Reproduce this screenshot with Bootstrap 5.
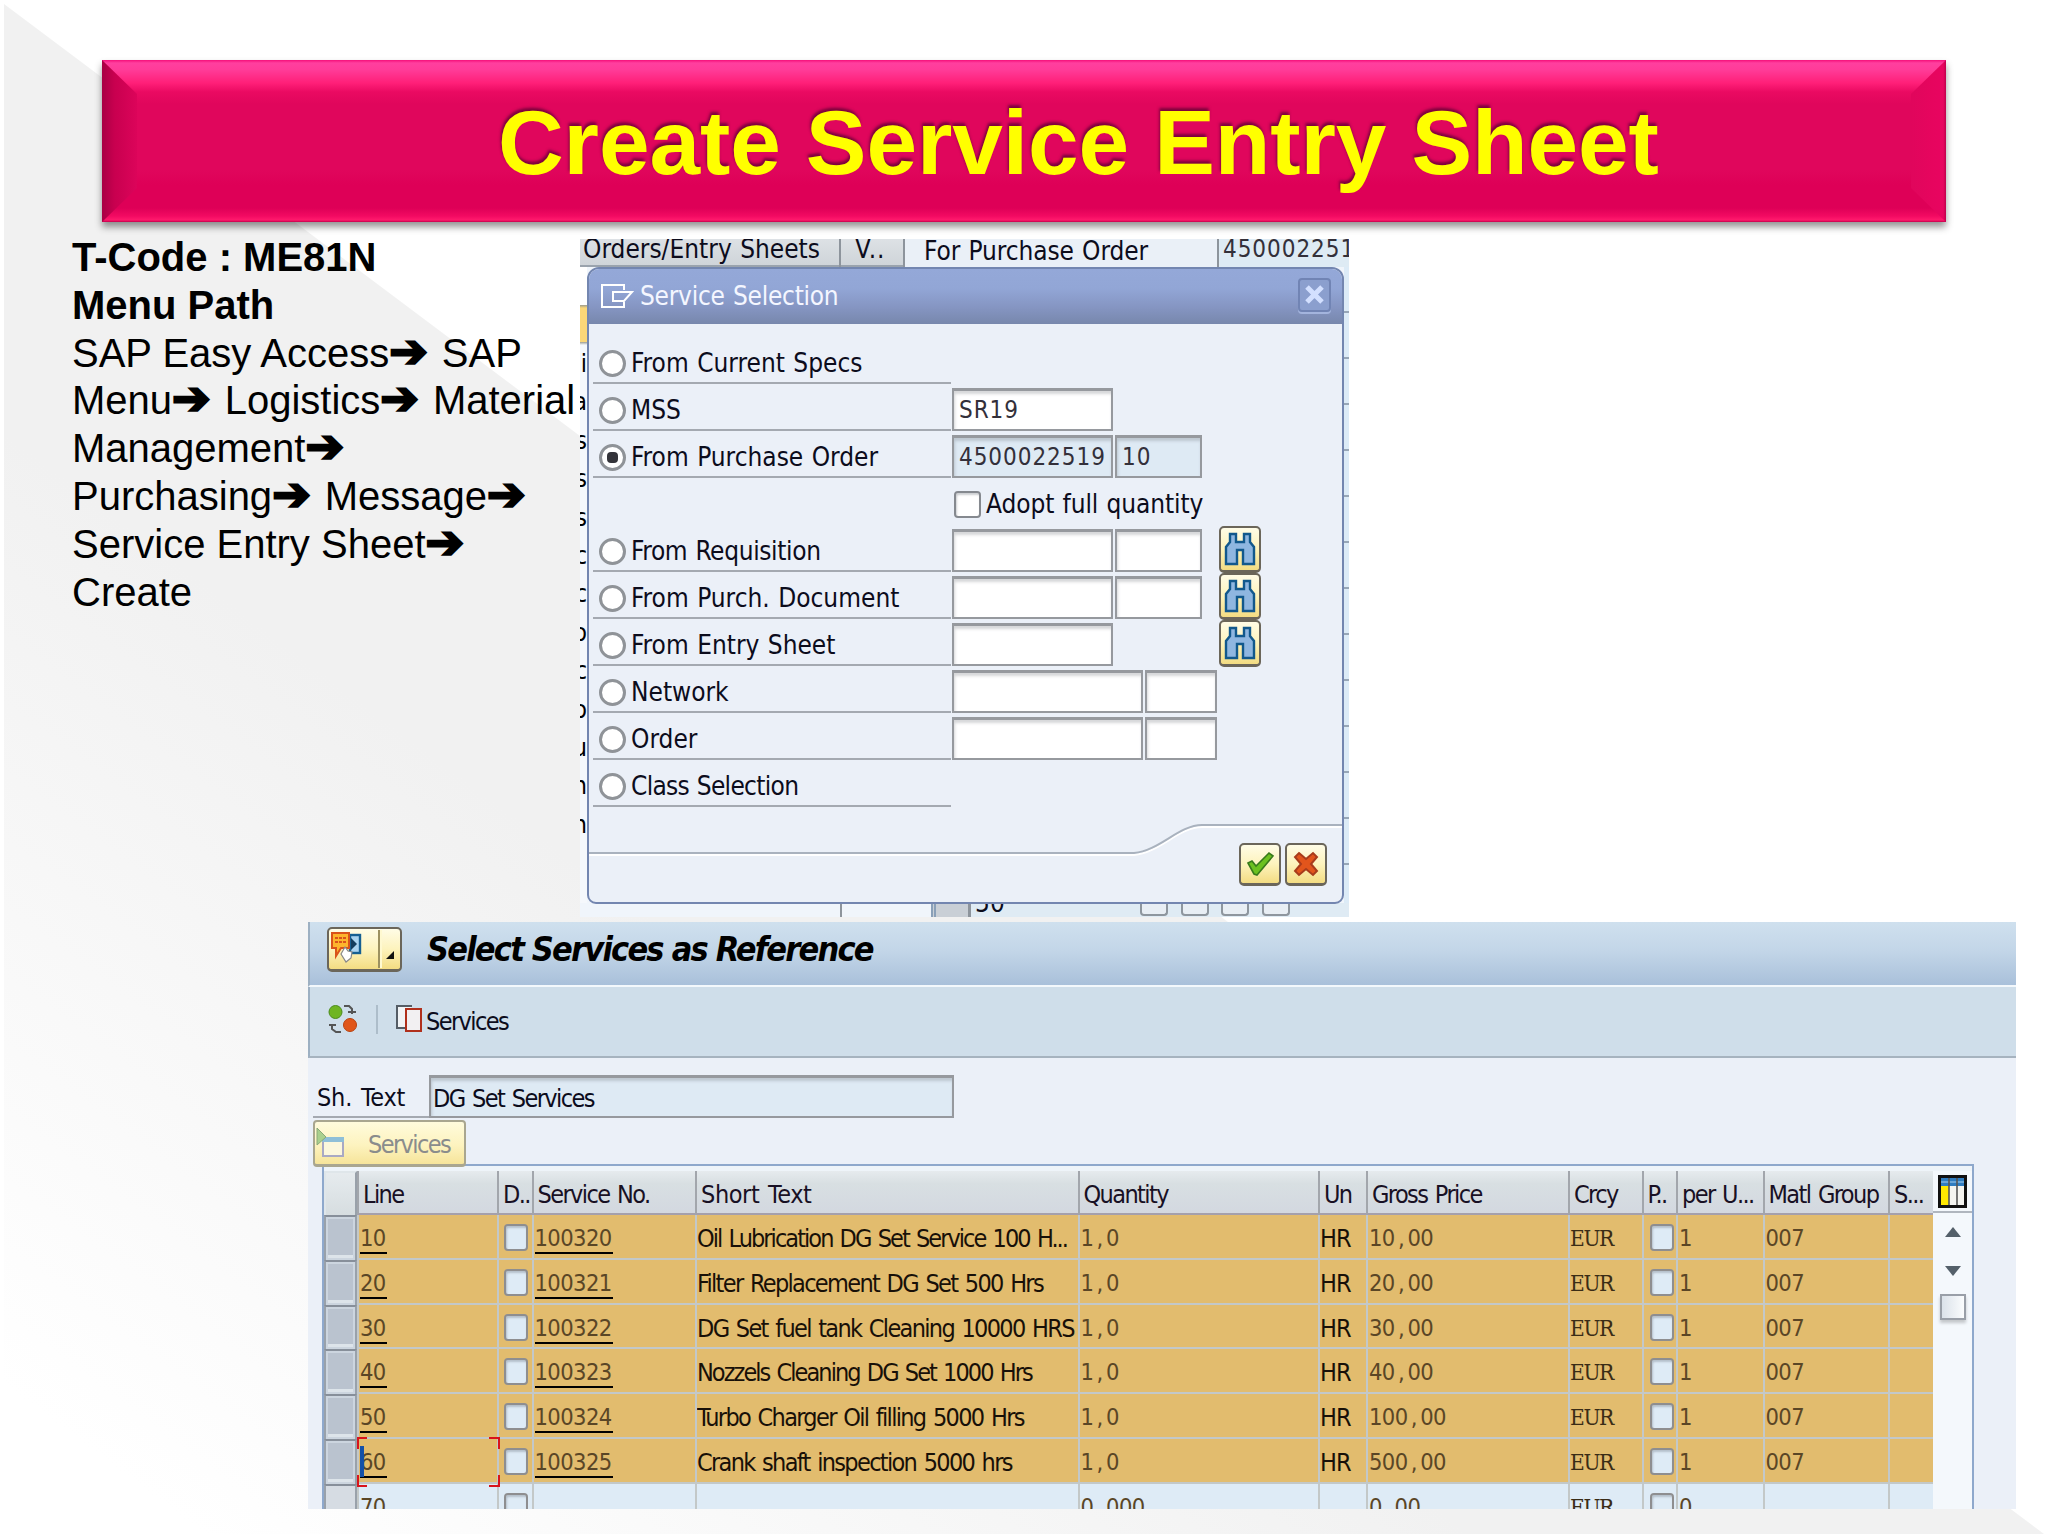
<!DOCTYPE html>
<html lang="en">
<head>
<meta charset="utf-8">
<meta name="viewport" content="width=device-width, initial-scale=1">
<title>Create Service Entry Sheet</title>
<link href="https://cdn.jsdelivr.net/npm/bootstrap@5.3.0/dist/css/bootstrap.min.css" rel="stylesheet">
<style>
  body { background:#fff; color:#000; font-family:"Liberation Sans",sans-serif; }
  svg { display:block; flex:none; }
  .slide { width:2048px; height:1536px; position:relative; overflow:hidden; isolation:isolate; }
  .slide::before { content:""; position:absolute; z-index:-1; inset:0;
    clip-path:polygon(4px 4px,2044px 1534px,4px 1534px);
    background:linear-gradient(to top right,#fff 5%,#f1f1f1 36%); }

  /* title banner */
  .banner { width:1844px; height:162px; margin:60px 0 0 102px; padding-left:396px; position:relative;
    background:linear-gradient(#f5107a 0,#ff3f9f 3px,#ff3b98 10px,#ff1f78 23px,#ea0a62 32px,#e0065c 44px,#e0065c 110px,#de0057 125px,#de0057 148px,#f20a62 156px,#ff1a6c 160px,#c4004c 162px);
    box-shadow:0 5px 7px rgba(0,0,0,.42); }
  .banner::before, .banner::after { content:""; position:absolute; top:0; bottom:0; width:35px; }
  .banner::before { left:0; clip-path:polygon(0 0,100% 34px,100% 128px,0 100%); background:linear-gradient(90deg,#a80044,#c8004f 35%,#dc045a); }
  .banner::after { right:0; clip-path:polygon(100% 0,0 34px,0 128px,100% 100%); background:linear-gradient(90deg,#e0065c,#e6055e 60%,#e80560 92%,#c0004c); }
  .banner h1 { font-size:91px; line-height:166px; letter-spacing:-.1px; font-weight:700; color:#ff0; white-space:nowrap;
    text-shadow:-1px -3px 3px rgba(90,0,50,.75); }

  .path-text { width:580px; padding:12px 0 0 72px; font-size:40px; line-height:47.8px; white-space:nowrap; }
  .arr { font-family:"DejaVu Sans",sans-serif; font-size:46px; display:inline-block; width:41.5px; line-height:40px; -webkit-text-stroke:2.5px #000; }

  /* SAP screens */
  .sap { font-family:"DejaVu Sans Condensed","DejaVu Sans",sans-serif; font-stretch:condensed; font-size:26px; white-space:nowrap; overflow:hidden; color:#0c0c1c; }
  .num { font-size:24px; letter-spacing:.95px; word-spacing:0; color:#33303a; }
  .shot1 { width:769px; height:678px; margin-top:17px; position:relative; background:#f0f5fb; letter-spacing:0; word-spacing:1px; }
  .tabs { height:28px; line-height:20px; background:linear-gradient(#dde1e5,#cfd4d9); border-bottom:2px solid #9aa3ad; }
  .tabs > div { height:28px; }
  .t1 { width:261px; padding-left:3px; border-right:2px solid #8d949c; line-height:20px; }
  .t2 { width:64px; padding-left:14px; border-right:2px solid #8d949c; line-height:20px; letter-spacing:1px; }
  .t3 { width:312px; padding-left:19px; line-height:24px; background:#eaf0f7; letter-spacing:-.1px; }
  .t4 { width:132px; padding-left:4px; border-left:2px solid #8d949c; background:#deebf4; line-height:21px; overflow:hidden; }
  .edge { height:636px; width:7px; overflow:hidden; }
  .edge span { display:block; direction:rtl; width:7px; height:38.4px; line-height:38px; color:#000; font-size:25px; }
  .edge-l { background:linear-gradient(#fff 0,#fff 38px,#9c9c90 38px,#fbd778 41px,#fbd778 75px,#9c9c90 75px,#f5f8fc 78px); padding-top:78px; }
  .edge-r { width:5px; background:repeating-linear-gradient(#dcebf7 0,#dcebf7 44px,#97a6b7 44px,#97a6b7 46px); }
  .under { height:14px; }
  .under .grayblk { width:40px; margin-left:-4px; background:#c9cfd6; border-left:5px double #8aa0b8; border-right:3px solid #8d949c; }
  .under .boxy { width:28px; height:13px; border:2px solid #8e969e; border-top:0; border-radius:0 0 4px 4px; margin-right:12.5px; background:#e8eef4; }

  .dlg { position:absolute; left:7px; top:28px; width:757px; height:637px; border:2px solid #7386b0; border-radius:12px 12px 9px 9px; background:#ebf0f8; overflow:hidden; }
  .dlg-title { height:55px; padding:0 11px 0 12px; background:linear-gradient(#94a8d8,#92a6d6 35%,#8595c2 70%,#7787ac); color:#f4f6ff; letter-spacing:-.25px; }
  .closer { width:33px; height:34px; border:2px solid #7184b4; border-radius:4px; background:#8b9fce; box-shadow:0 2px 0 #a3b4dd; margin-top:-4px; }
  .opts { padding:13px 0 0 4px; }
  .opt { height:47px; }
  .opt-l { width:358px; height:47px; border-bottom:2px solid #a4a9b1; padding:8px 0 0 6px; }
  .opt-l.bare { border-color:transparent; }
  .tight { letter-spacing:-.7px; }
  .half { letter-spacing:-.35px; }
  .rad { width:27px; height:27px; border:3px solid #8f9398; border-radius:50%; background:#fff; margin-right:5px; display:flex; align-items:center; justify-content:center; flex:none; }
  .rad.on::after { content:""; width:11px; height:11px; border-radius:4px; background:#34343a; }
  .fld { height:43px; border:2px solid #96999e; border-top-width:3px; background:#fff; box-shadow:inset 1px 3px 3px rgba(90,95,105,.25); padding-left:5px; line-height:38px; margin-left:1px; }
  .fld + .fld { margin-left:2px; }
  .fld.ro { background:#deeaf4; }
  .w-a { width:161px; } .w-b { width:87px; } .w-c { width:191px; } .w-d { width:72px; }
  .chk { width:27px; height:27px; border:2px solid #85898f; border-radius:4px; background:#fff; box-shadow:inset 1px 2px 2px rgba(90,95,105,.3); flex:none; }
  .ybtn { border:2px solid #6b665a; border-bottom-width:3px; border-radius:5px; background:linear-gradient(#fffce6,#fdf3bd 50%,#f3dc82); display:flex; align-items:center; justify-content:center; }
  .bino { width:42px; height:47px; position:relative; top:1px; }
  .gap-18 { margin-left:17px; }

  .shot2 { width:1708px; height:587px; margin:5px 0 0 308px; background:#ebf0f8; font-size:25px; letter-spacing:-1.6px; word-spacing:2px; }
  .loose { letter-spacing:-.4px; }
  .bar1 { height:65px; padding:5px 0 0 17px; border-left:2px solid #9db0c2; background:linear-gradient(#cfe0ee,#c3d6e8 45%,#a9c0da); border-bottom:2px solid #f3f8fc; }
  .bar1 h2 { font-size:34px; font-weight:700; font-style:italic; letter-spacing:-1.8px; word-spacing:0; line-height:45px; color:#000; margin:0 0 0 25px; }
  .menubtn { width:75px; height:45px; justify-content:flex-start; }
  .bar2 { height:71px; padding:0 0 0 18px; border-left:2px solid #9db0c2; border-bottom:2px solid #a6b3bf; background:#cfdeea; }
  .sep { width:2px; height:29px; background:#adbdca; margin:0 18px; }
  .shtext { height:60px; padding:17px 0 0 5px; }
  .shlab { width:116px; height:43px; border-bottom:2px solid #a4a9b1; padding-left:4px; line-height:46px; letter-spacing:-.2px; }
  .shfld { width:525px; margin:0; line-height:41px; padding-left:2px; }
  .svc { width:153px; height:47px; margin:2px 0 0 5px; padding-left:1px; border:2px solid #a9a68f; border-bottom-width:3px; border-radius:4px; background:linear-gradient(#fffbdc,#fdf3bf 55%,#f6e49a); color:#8a8c8c; justify-content:flex-start; position:relative; z-index:1; }

  .grid-wrap { width:1652px; height:346px; margin:-3px 0 0 14px; border:2px solid #8ea8cc; border-bottom:0; background:#eef4f9; padding-top:5px; }
  .gr { display:grid; grid-template-columns:33px 140px 34.5px 163.5px 382.5px 240.5px 48px 202px 73.5px 34.5px 86.5px 125.5px 45px; width:1609px; height:44.8px; }
  .gr > div { border-left:2px solid #c3c8c8; border-bottom:2px solid #c3c8c8; padding-left:0; line-height:48px; overflow:hidden; background:#e2bc6e; height:44.8px; color:#181008; }
  .gr .num { font-size:23.5px; letter-spacing:-.6px; line-height:46px; color:#5a4626; padding-left:1px; }
  .gr .eur { font-family:"DejaVu Serif Condensed","DejaVu Serif",serif; font-size:22.5px; letter-spacing:-1.4px; line-height:46px; color:#3a2c16; }
  .gr .unit { letter-spacing:-.8px; }
  .gr .item { letter-spacing:-1.68px; }
  .gr .item.narrow { letter-spacing:-1.95px; }
  .gr.head { height:44px; }
  .gr.head > div { height:44px; background:linear-gradient(#e6ebee,#d8dfe2 30%,#d3d8e0); border-left-color:#a2a6ac; border-bottom-color:#a5a0ac; padding-left:4px; line-height:48px; color:#181024; }
  .gr > div.sel { border:2px solid #99a1aa; border-top-color:#878f9a; border-bottom:0; background:#bac3cf; box-shadow:inset 0 0 0 2px #ccd5df, inset 0 -5px 0 #dde4ea; padding:0; }
  .gr.head > div.sel { box-shadow:none; background:linear-gradient(#e6ebee,#d6dde0); border-color:#dfe6ea #99a1aa #99a1aa #dfe6ea; }
  .gr.last > div { background:#deebf6; }
  .gr.last > div.sel { background:#d6dce3; box-shadow:none; }
  .gr u { text-decoration:none; display:inline-block; height:39px; border-bottom:2px solid #000; padding-right:1px; }
  .gr .chk { width:24px; height:27px; margin:9px 0 0 5px; border-color:#8e8e90; background:#deebf6; }
  .gr .chk.p { margin-left:6px; }
  .cm { margin:0 3.4px 0 3.2px; }
  .focus-cell { position:relative; }
  .focus-cell svg { position:absolute; left:-2px; top:-2px; }
  .vbar { width:39px; background:#f4f8fc; }
  .tri { width:0; height:0; border:8px solid transparent; }
  .thumb { width:26px; height:26px; border:2px solid #999fa8; background:linear-gradient(90deg,#dbe2ea,#fafcfd); box-shadow:0 3px 3px rgba(0,0,0,.2); }
</style>
</head>
<body>
<main class="slide">
  <header class="banner"><h1 class="m-0">Create Service Entry Sheet</h1></header>

  <div class="d-flex">
    <section class="path-text">
      <b>T-Code : ME81N</b><br><b>Menu Path</b><br>
      SAP Easy Access<span class="arr">➔</span> SAP<br>
      Menu<span class="arr">➔</span> Logistics<span class="arr">➔</span> Material<br>
      Management<span class="arr">➔</span><br>
      Purchasing<span class="arr">➔</span> Message<span class="arr">➔</span><br>
      Service Entry Sheet<span class="arr">➔</span><br>
      Create
    </section>

    <section class="sap shot1">
      <div class="tabs d-flex">
        <div class="t1">Orders/Entry Sheets</div><div class="t2">V..</div>
        <div class="t3">For Purchase Order</div><div class="t4 num">4500022513</div>
      </div>
      <div class="d-flex justify-content-between">
        <div class="edge edge-l"><span>i</span><span>a</span><span>s</span><span>s</span><span>s</span><span>c</span><span>c</span><span>o</span><span>c</span><span>o</span><span>u</span><span>n</span><span>n</span></div>
        <div class="edge edge-r"></div>
      </div>
      <div class="under d-flex">
        <div style="width:260px"></div><div style="width:95px;border-left:2px solid #8d949c"></div>
        <div class="grayblk"></div>
        <div class="d-flex flex-fill" style="background:#dfebf4"><div style="width:169px;padding-left:4px;line-height:0">50</div><div class="boxy"></div><div class="boxy"></div><div class="boxy"></div><div class="boxy"></div></div>
      </div>

      <div class="dlg d-flex flex-column">
        <div class="dlg-title d-flex align-items-center">
          <svg width="33" height="25" viewBox="0 0 33 25" fill="none" stroke="#fff" stroke-width="2"><path d="M23 6V1H1v22h22v-5M12 8h19l-8 9H12z"/></svg>
          <span style="margin-left:6px">Service Selection</span>
          <span class="closer ms-auto d-flex align-items-center justify-content-center"><svg width="19" height="19" viewBox="0 0 19 19" stroke="#d3e0ff" stroke-width="5"><path d="M2 2l15 15M17 2L2 17"/></svg></span>
        </div>
        <div class="opts">
          <div class="opt d-flex"><div class="opt-l d-flex align-items-center"><i class="rad"></i>From Current Specs</div></div>
          <div class="opt d-flex align-items-end"><div class="opt-l d-flex align-items-center"><i class="rad"></i>MSS</div><div class="fld w-a num">SR19</div></div>
          <div class="opt d-flex align-items-end"><div class="opt-l d-flex align-items-center"><i class="rad on"></i>From Purchase Order</div><div class="fld ro w-a num">4500022519</div><div class="fld ro w-b num">10</div></div>
          <div class="opt d-flex"><div class="opt-l bare"></div><div class="d-flex align-items-center" style="padding-top:6px;letter-spacing:-.1px"><i class="chk" style="margin:0 5px 0 3px"></i>Adopt full quantity</div></div>
          <div class="opt d-flex align-items-end"><div class="opt-l d-flex align-items-center half"><i class="rad"></i>From Requisition</div><div class="fld w-a"></div><div class="fld w-b"></div><span class="ybtn bino gap-18"><svg width="32" height="34" viewBox="0 0 32 34"><path d="M6 2h6v8h8V2h6v8l4 5v17H19V18h-6v14H2V15l4-5z" fill="#8fb6e0" stroke="#12588c" stroke-width="2.4"/></svg></span></div>
          <div class="opt d-flex align-items-end"><div class="opt-l d-flex align-items-center"><i class="rad"></i>From Purch. Document</div><div class="fld w-a"></div><div class="fld w-b"></div><span class="ybtn bino gap-18"><svg width="32" height="34" viewBox="0 0 32 34"><path d="M6 2h6v8h8V2h6v8l4 5v17H19V18h-6v14H2V15l4-5z" fill="#8fb6e0" stroke="#12588c" stroke-width="2.4"/></svg></span></div>
          <div class="opt d-flex align-items-end"><div class="opt-l d-flex align-items-center"><i class="rad"></i>From Entry Sheet</div><div class="fld w-a"></div><span class="ybtn bino" style="margin-left:106px"><svg width="32" height="34" viewBox="0 0 32 34"><path d="M6 2h6v8h8V2h6v8l4 5v17H19V18h-6v14H2V15l4-5z" fill="#8fb6e0" stroke="#12588c" stroke-width="2.4"/></svg></span></div>
          <div class="opt d-flex align-items-end"><div class="opt-l d-flex align-items-center"><i class="rad"></i>Network</div><div class="fld w-c"></div><div class="fld w-d"></div></div>
          <div class="opt d-flex align-items-end"><div class="opt-l d-flex align-items-center"><i class="rad"></i>Order</div><div class="fld w-c"></div><div class="fld w-d"></div></div>
          <div class="opt d-flex"><div class="opt-l d-flex align-items-center tight"><i class="rad"></i>Class Selection</div></div>
        </div>
        <div class="position-relative mt-auto d-flex justify-content-end" style="height:79px;padding:20px 15px 0 0">
          <svg class="position-absolute start-0 top-0" width="754" height="34" viewBox="0 0 754 34" fill="none"><path d="M0 32H545C570 30 590 4 613 4H754" stroke="#fff" stroke-width="2"/><path d="M0 30H545C570 28 590 2 613 2H754" stroke="#a9b2be" stroke-width="2"/></svg>
          <span class="ybtn" style="width:42px;height:43px"><svg width="30" height="26" viewBox="0 0 30 26"><path d="M3 12l4-2 4 5L24 2l4 3-16 19-3-1z" fill="#6cc120" stroke="#387a1c" stroke-width="1.6"/></svg></span>
          <span class="ybtn" style="width:42px;height:43px;margin-left:4px"><svg width="28" height="28" viewBox="0 0 28 28"><path d="M7 3l7 6 7-6 4 4-6 7 6 7-4 4-7-6-7 6-4-4 6-7-6-7z" fill="#e2551c" stroke="#a83c1c" stroke-width="2"/></svg></span>
        </div>
      </div>
    </section>
  </div>

  <section class="sap shot2">
    <div class="bar1 d-flex">
      <span class="ybtn menubtn">
        <svg width="71" height="40" viewBox="0 0 71 40"><rect x="21" y="6" width="10" height="18" fill="#a9d3ef" stroke="#155f92" stroke-width="2.4"/><path d="M22 9v12l6-6z" fill="#123c5c"/><path d="M3 4h17v15h-8l-5 8v-8H3z" fill="#fdb52c" stroke="#d9531a" stroke-width="2"/><path d="M6 9h11M6 13h11" stroke="#d9531a" stroke-width="2" stroke-dasharray="3 1"/><path d="M12 25l4-7 3 4 4 1-1 6-5 4z" fill="#fff" stroke="#888" stroke-width="1.2"/><path d="M50 1v38" stroke="#9d9160" stroke-width="2"/><path d="M52 1v38" stroke="#fff9d0" stroke-width="2"/><path d="M65 22v8h-8z" fill="#111"/></svg>
      </span>
      <h2>Select Services as Reference</h2>
    </div>
    <div class="bar2 d-flex">
      <svg style="margin-top:16px" width="30" height="32" viewBox="0 0 30 32"><circle cx="7.500" cy="9" r="6.500" fill="#6fb522" stroke="#4b8b1a"/><circle cx="22" cy="22" r="6.500" fill="#e0561a" stroke="#b8410f"/><path d="M16 3h5l3 3v5M20 9h8M13 29H8l-4-3v-5M1 22h7" fill="none" stroke="#555" stroke-width="2"/></svg>
      <i class="sep" style="margin-top:18px"></i>
      <svg style="margin-top:17px" width="26" height="30" viewBox="0 0 26 30" stroke-width="2"><path d="M16 2H1v22h8" fill="#f2f4f6" stroke="#555d66"/><path d="M10 5h15v22H10z" fill="#f2f0f2" stroke="#b0301c"/></svg>
      <span style="margin-left:4px;line-height:69px">Services</span>
    </div>
    <div class="shtext d-flex"><div class="shlab">Sh. Text</div><div class="fld ro shfld">DG Set Services</div></div>
    <div class="ybtn svc">
      <svg width="30" height="34" viewBox="0 0 30 34"><path d="M7 12h20v18H7z" fill="#fcf7dc" stroke="#a9a9c4" stroke-width="2"/><path d="M6 11h22v5H6z" fill="#8fbfd8"/><path d="M1 2l9 9-9 8z" fill="#a9d08e" stroke="#8aa878"/></svg>
      <span style="margin-left:22px;padding-top:3px">Services</span>
    </div>
    <div class="grid-wrap d-flex">
      <div id="gridRows"></div>
      <div class="vbar d-flex flex-column align-items-center">
        <svg style="margin-top:4px" width="29" height="33" viewBox="0 0 29 33"><path d="M1.500 1.500h26v30h-26z" fill="#f4f4f0" stroke="#111" stroke-width="3"/><path d="M3 3h23v8H3z" fill="#2f7cc0"/><path d="M3 11h8v19H3z" fill="#ffe800"/><path d="M3 7h23" stroke="#7fb4e0" stroke-width="1.500"/><path d="M11 3v27M19 3v27" stroke="#555" stroke-width="1.600"/></svg>
        <div class="w-100" style="height:5px;border-bottom:2px solid #b0b6be"></div>
        <div class="tri" style="margin-top:6px;border-bottom:10px solid #54606a"></div>
        <div class="tri" style="margin-top:29px;border-top:10px solid #54606a"></div>
        <div class="thumb" style="margin-top:10px"></div>
      </div>
    </div>
  </section>
</main>

<script>
  // Column heads, then one entry per service line: line, number, text, quantity, unit, price, per, material group
  const heads = ['', 'Line', 'D..', 'Service No.', 'Short Text', 'Quantity', 'Un', 'Gross Price', 'Crcy', 'P..', 'per U...', 'Matl Group', 'S...'];
  const lines = [
    ['10', '100320', 'Oil Lubrication DG Set Service 100 H...', '1,0', 'HR', '10,00', '1', '007'],
    ['20', '100321', 'Filter Replacement DG Set 500 Hrs', '1,0', 'HR', '20,00', '1', '007'],
    ['30', '100322', 'DG Set fuel tank Cleaning 10000 HRS', '1,0', 'HR', '30,00', '1', '007'],
    ['40', '100323', 'Nozzels Cleaning DG Set 1000 Hrs', '1,0', 'HR', '40,00', '1', '007'],
    ['50', '100324', 'Turbo Charger Oil filling 5000 Hrs', '1,0', 'HR', '100,00', '1', '007'],
    ['60', '100325', 'Crank shaft inspection 5000 hrs', '1,0', 'HR', '500,00', '1', '007'],
    ['70', '', '', '0,000', '', '0,00', '0', '']
  ];
  const n = s => s.replace(',', '<span class="cm">,</span>');
  const u = s => s ? `<u>${s}</u>` : '';
  const narrow = ['10', '40'];
  const corners = '<svg width="143" height="50" viewBox="0 0 143 50" fill="none" stroke="#d8141c" stroke-width="2"><path d="M10 1H1v11M132 1h10v11M10 49H1V38M132 49h10V38"/><path d="M5 9v31" stroke="#1450a8" stroke-width="4"/></svg>';
  const headClass = { '': 'sel', 'Short Text': 'loose' };
  let html = '<div class="gr head">' + heads.map(h => `<div class="${headClass[h] || ''}">${h}</div>`).join('') + '</div>';
  for (const [no, sv, tx, q, un, pr, per, mg] of lines) {
    html += `<div class="gr${no === '70' ? ' last' : ''}"><div class="sel"></div>` +
      `<div class="num${no === '60' ? ' focus-cell overflow-visible' : ''}">${u(no)}${no === '60' ? corners : ''}</div>` +
      `<div><span class="chk d-block"></span></div><div class="num">${u(sv)}</div><div class="item${narrow.includes(no) ? ' narrow' : ''}">${tx}</div>` +
      `<div class="num">${n(q)}</div><div class="unit">${un}</div><div class="num">${n(pr)}</div><div class="eur">EUR</div>` +
      `<div><span class="chk p d-block"></span></div><div class="num">${per}</div><div class="num">${mg}</div><div></div></div>`;
  }
  document.getElementById('gridRows').innerHTML = html;
</script>
<script src="https://cdn.jsdelivr.net/npm/bootstrap@5.3.0/dist/js/bootstrap.bundle.min.js"></script>
</body>
</html>
